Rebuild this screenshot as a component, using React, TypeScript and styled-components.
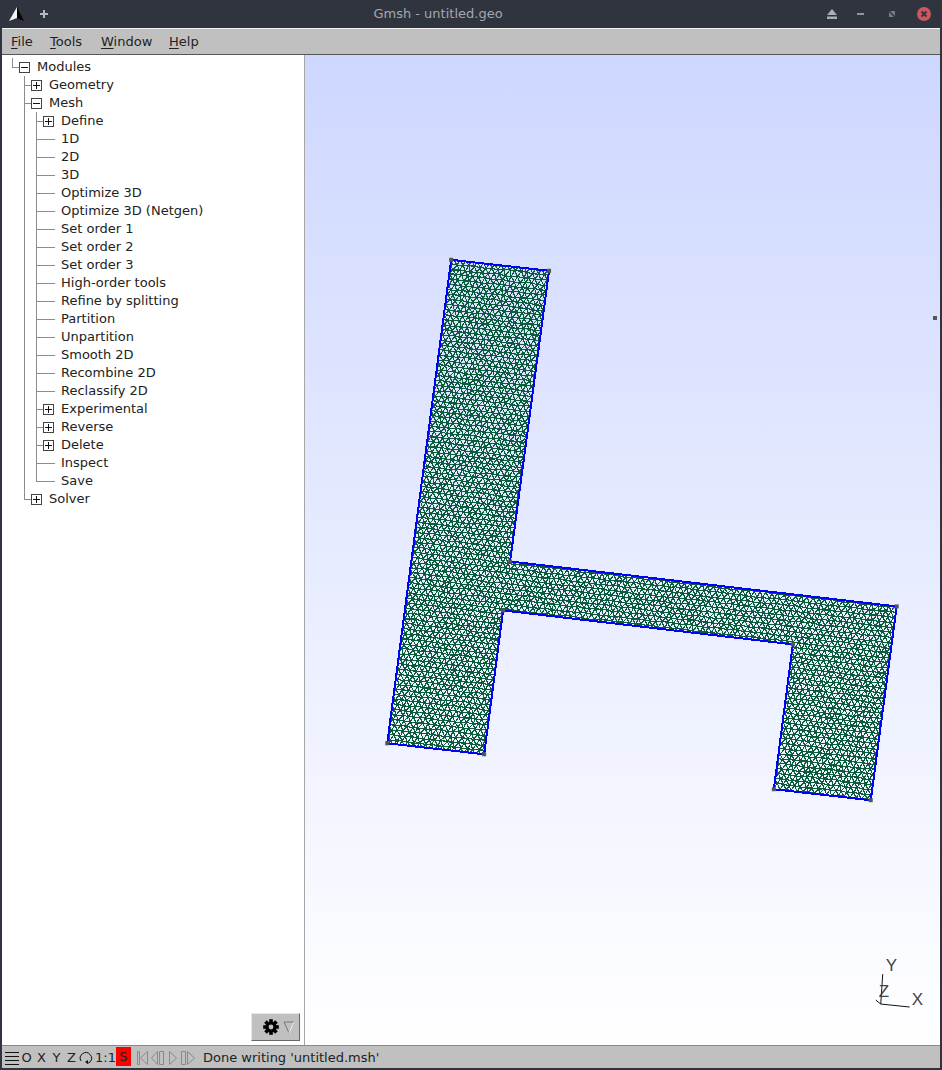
import React, { useMemo } from "react";
import styled, { createGlobalStyle } from "styled-components";

const GlobalStyle = createGlobalStyle`
  html, body { margin: 0; padding: 0; background: #2f343f; }
  #root { width: 942px; height: 1070px; }
`;

type Connector = "blank" | "through" | "tee" | "elbow";
type Toggle = "plus" | "minus" | "leaf";

interface TreeRowData {
  label: string;
  guides: Connector[];
  toggle: Toggle;
}

const leaf = (label: string, elbow = false): TreeRowData => ({
  label,
  guides: ["blank", "through", elbow ? "elbow" : "tee"],
  toggle: "leaf",
});
const child = (label: string, toggle: Toggle): TreeRowData => ({
  label,
  guides: ["blank", "through", "tee"],
  toggle,
});

const treeRows: TreeRowData[] = [
  { label: "Modules", guides: ["elbow"], toggle: "minus" },
  { label: "Geometry", guides: ["blank", "tee"], toggle: "plus" },
  { label: "Mesh", guides: ["blank", "tee"], toggle: "minus" },
  child("Define", "plus"),
  leaf("1D"),
  leaf("2D"),
  leaf("3D"),
  leaf("Optimize 3D"),
  leaf("Optimize 3D (Netgen)"),
  leaf("Set order 1"),
  leaf("Set order 2"),
  leaf("Set order 3"),
  leaf("High-order tools"),
  leaf("Refine by splitting"),
  leaf("Partition"),
  leaf("Unpartition"),
  leaf("Smooth 2D"),
  leaf("Recombine 2D"),
  leaf("Reclassify 2D"),
  child("Experimental", "plus"),
  child("Reverse", "plus"),
  child("Delete", "plus"),
  leaf("Inspect"),
  leaf("Save", true),
  { label: "Solver", guides: ["blank", "elbow"], toggle: "plus" },
];

const outline: [number, number][] = [
  [451, 260],
  [549, 271],
  [510, 562],
  [897, 607],
  [871, 801],
  [774, 790],
  [793, 645],
  [503, 611],
  [484, 755],
  [387, 744],
];

// jittered triangle lattice, same tilt as the part
function buildMesh(): string {
  let seed = 7;
  const rnd = () => {
    seed = (seed * 16807) % 2147483647;
    return seed / 2147483647 - 0.5;
  };
  const step = 5.9;
  const rowH = step * 0.866;
  const angle = (6.5 * Math.PI) / 180;
  const cos = Math.cos(angle);
  const sin = Math.sin(angle);
  const cols = 135;
  const rows = 165;
  const nodes: [number, number][][] = [];
  for (let r = 0; r < rows; r++) {
    const line: [number, number][] = [];
    for (let c = 0; c < cols; c++) {
      const lx = (c - cols / 2) * step + (r % 2 ? step / 2 : 0) + rnd() * 1.4;
      const ly = (r - rows / 2) * rowH + rnd() * 1.4;
      line.push([640 + lx * cos - ly * sin, 530 + lx * sin + ly * cos]);
    }
    nodes.push(line);
  }
  const pt = (p: [number, number]) => `${p[0].toFixed(1)} ${p[1].toFixed(1)}`;
  const parts: string[] = [];
  for (let r = 0; r < rows; r++) {
    for (let c = 0; c < cols; c++) {
      const n = nodes[r][c];
      if (n[0] < 370 || n[0] > 915 || n[1] < 245 || n[1] > 815) continue;
      if (c + 1 < cols) parts.push(`M${pt(n)}L${pt(nodes[r][c + 1])}`);
      if (r + 1 < rows) {
        parts.push(`M${pt(n)}L${pt(nodes[r + 1][c])}`);
        const d = r % 2 ? c + 1 : c - 1;
        if (d >= 0 && d < cols) parts.push(`M${pt(n)}L${pt(nodes[r + 1][d])}`);
      }
    }
  }
  return parts.join("");
}

const Window = styled.div`
  width: 942px;
  height: 1070px;
  display: flex;
  flex-direction: column;
  box-sizing: border-box;
  padding: 0 2px 2px;
  background: #2f343f;
  overflow: hidden;
  font-family: "DejaVu Sans", sans-serif;
  font-size: 13px;
  color: #222;
`;

const TitleBar = styled.header`
  height: 28px;
  flex: none;
  display: flex;
  align-items: center;
  margin: 0 -2px;
  padding: 0 10px 0 9px;
`;

const TitleLeft = styled.div`
  width: 42px;
  flex: none;
  display: flex;
  align-items: center;
  gap: 14px;
`;

const TitleText = styled.div`
  flex: 1;
  text-align: center;
  font-size: 13px;
  line-height: 16px;
  color: #a3a8b3;
`;

const TitleActions = styled.div`
  flex: none;
  display: flex;
  align-items: center;
  gap: 16px;
`;

const WinIcon = styled.svg<{ $nudge?: number }>`
  display: block;
  flex: none;
  margin-left: ${(p) => p.$nudge ?? 0}px;
`;

const MenuBar = styled.nav`
  height: 27px;
  flex: none;
  box-sizing: border-box;
  display: flex;
  align-items: center;
  padding: 1px 0 0 9px;
  background: #c0c0c0;
  border-top: 1px solid #f2f2f2;
  border-bottom: 1px solid #555;
`;

const MenuItem = styled.span<{ $w: number }>`
  width: ${(p) => p.$w}px;
  flex: none;
  line-height: 18px;
  u {
    text-underline-offset: 2px;
  }
`;

const Body = styled.main`
  flex: 1;
  min-height: 0;
  display: flex;
`;

const SidePanel = styled.aside`
  width: 302px;
  flex: none;
  display: flex;
  flex-direction: column;
  background: #fff;
`;

const Tree = styled.ul`
  flex: 1;
  list-style: none;
  margin: 0;
  padding: 3px 0 0 10px;
`;

const Row = styled.li`
  height: 18px;
  display: flex;
  align-items: stretch;
`;

const guideLine = "#8c8c8c";

const Guide = styled.span<{ $kind: Connector; $wide: boolean; $end: boolean }>`
  flex: none;
  box-sizing: border-box;
  width: ${(p) => (!p.$end ? "12px" : p.$wide ? "19px" : "7px")};
  background-repeat: no-repeat;
  background-image: ${(p) =>
    p.$kind === "blank"
      ? "none"
      : `linear-gradient(${guideLine}, ${guideLine}),
         linear-gradient(${guideLine}, ${guideLine})`};
  background-size: ${(p) =>
    p.$kind === "through"
      ? "1px 100%, 0 0"
      : p.$kind === "elbow"
        ? "1px 10px, 100% 1px"
        : "1px 100%, 100% 1px"};
  background-position: 0 0, 0 9px;
`;

const ToggleBox = styled.span`
  flex: none;
  width: 11px;
  height: 11px;
  margin: 4px 1px 0 0;
  box-sizing: border-box;
  border: 1px solid #444;
  background: #fff;
  display: grid;
  place-items: center;
`;

const ToggleGlyph = styled.svg`
  display: block;
`;

const Label = styled.span`
  margin-left: 6px;
  line-height: 18px;
  white-space: nowrap;
`;

const PanelFoot = styled.div`
  flex: none;
  display: flex;
  justify-content: flex-end;
  padding: 0 4px 4px 0;
`;

const GearButton = styled.button`
  width: 49px;
  height: 28px;
  padding: 0 3px 0 10px;
  box-sizing: border-box;
  display: flex;
  align-items: center;
  justify-content: space-between;
  background: #c0c0c0;
  border: 1px solid;
  border-color: #e6e6e6 #666 #666 #e6e6e6;
`;

const Canvas = styled.section`
  flex: 1;
  min-width: 0;
  position: relative;
  border-left: 1px solid #a6a6a6;
  background: linear-gradient(#ced7ff 0%, #ffffff 100%);
`;

const Viewport = styled.svg`
  display: block;
  width: 100%;
  height: 100%;
`;

const SashDot = styled.span`
  position: absolute;
  right: 3px;
  top: 261px;
  width: 4px;
  height: 4px;
  background: #555;
`;

const StatusBar = styled.footer`
  height: 23px;
  flex: none;
  box-sizing: border-box;
  display: flex;
  align-items: center;
  padding: 1px 0 0 3px;
  background: #c0c0c0;
  border-top: 1px solid #8a8a8a;
`;

const StatusIcon = styled.svg<{ $after?: number }>`
  display: block;
  flex: none;
  margin-right: ${(p) => p.$after ?? 0}px;
`;

const StatusKey = styled.span<{ $w: number; $active?: boolean }>`
  flex: none;
  width: ${(p) => p.$w}px;
  align-self: ${(p) => (p.$active ? "stretch" : "auto")};
  margin-bottom: ${(p) => (p.$active ? "2px" : "0")};
  line-height: ${(p) => (p.$active ? "19px" : "18px")};
  text-align: center;
  background: ${(p) => (p.$active ? "#ff0000" : "transparent")};
`;

const NavIcons = styled.svg`
  display: block;
  flex: none;
  margin-left: 4px;
`;

const StatusMessage = styled.span`
  margin-left: 8px;
  white-space: nowrap;
`;

const MeshView: React.FC = () => {
  const meshPath = useMemo(buildMesh, []);
  const points = outline.map((p) => p.join(",")).join(" ");
  return (
    <Viewport viewBox="305 55 635 991">
      <defs>
        <clipPath id="part">
          <polygon points={points} />
        </clipPath>
      </defs>
      <g clipPath="url(#part)">
        <path d={meshPath} stroke="#0a5c3a" strokeWidth="1.2" fill="none" shapeRendering="crispEdges" />
      </g>
      <polygon points={points} fill="none" stroke="#0000ff" strokeWidth="2" shapeRendering="crispEdges" />
      {outline.map(([x, y]) => (
        <rect key={`${x}-${y}`} x={x - 2} y={y - 2} width="4" height="4" fill="#555" />
      ))}
      <g stroke="#111" strokeWidth="1" fill="none">
        <path d="M881 1005 L883 975" />
        <path d="M881 1005 L910 1008" />
        <path d="M881 1005 L876 1001" />
      </g>
      <g fontFamily="'Liberation Sans', sans-serif" fontSize="17" fill="#444">
        <text x="886" y="972">Y</text>
        <text x="912" y="1006">X</text>
        <text x="879" y="998">Z</text>
      </g>
    </Viewport>
  );
};

const App: React.FC = () => (
  <>
    <GlobalStyle />
    <Window>
      <TitleBar>
        <TitleLeft>
          <WinIcon width="16" height="16" viewBox="0 0 16 16">
            <polygon points="8,1 0,15 8,12" fill="#f2f2f2" />
            <polygon points="8,1 15,15 8,12" fill="#050505" />
          </WinIcon>
          <WinIcon width="10" height="10" viewBox="0 0 10 10">
            <path d="M5 1v8M1 5h8" stroke="#b6bac3" strokeWidth="2" />
          </WinIcon>
        </TitleLeft>
        <TitleText>Gmsh - untitled.geo</TitleText>
        <TitleActions>
          <WinIcon width="14" height="14" viewBox="0 0 14 14">
            <path d="M7 2l5 6H2z" fill="#a9aeb9" />
            <rect x="2" y="9.5" width="10" height="2.5" fill="#a9aeb9" />
          </WinIcon>
          <WinIcon width="14" height="14" viewBox="0 0 14 14" $nudge={-1}>
            <rect x="3" y="6" width="7" height="2" fill="#8f94a0" />
          </WinIcon>
          <WinIcon width="14" height="14" viewBox="0 0 14 14" $nudge={1}>
            <path d="M5 4h5v5z M9 10H4V5z" fill="#777c88" />
          </WinIcon>
          <WinIcon width="16" height="16" viewBox="0 0 16 16" $nudge={1}>
            <circle cx="8" cy="8" r="7" fill="#cc575d" />
            <path d="M5.5 5.5l5 5M10.5 5.5l-5 5" stroke="#2f343f" strokeWidth="1.8" />
          </WinIcon>
        </TitleActions>
      </TitleBar>

      <MenuBar>
        <MenuItem $w={39}><u>F</u>ile</MenuItem>
        <MenuItem $w={51}><u>T</u>ools</MenuItem>
        <MenuItem $w={68}><u>W</u>indow</MenuItem>
        <MenuItem $w={40}><u>H</u>elp</MenuItem>
      </MenuBar>

      <Body>
        <SidePanel>
          <Tree>
            {treeRows.map((row) => (
              <Row key={row.label}>
                {row.guides.map((g, i) => (
                  <Guide
                    key={i}
                    $kind={g}
                    $end={i === row.guides.length - 1}
                    $wide={row.toggle === "leaf"}
                  />
                ))}
                {row.toggle !== "leaf" && (
                  <ToggleBox>
                    <ToggleGlyph width="7" height="7" viewBox="0 0 7 7">
                      <path
                        d={row.toggle === "plus" ? "M0 3.5h7M3.5 0v7" : "M0 3.5h7"}
                        stroke="#111"
                        strokeWidth="1"
                        shapeRendering="crispEdges"
                      />
                    </ToggleGlyph>
                  </ToggleBox>
                )}
                <Label>{row.label}</Label>
              </Row>
            ))}
          </Tree>
          <PanelFoot>
            <GearButton type="button" aria-label="Options">
              <svg width="18" height="18" viewBox="0 0 18 18">
                <g fill="#000">
                  <circle cx="9" cy="9" r="5.6" />
                  {[0, 45, 90, 135].map((a) => (
                    <rect key={a} x="7.2" y="1.2" width="3.6" height="15.6" transform={`rotate(${a} 9 9)`} />
                  ))}
                </g>
                <circle cx="9" cy="9" r="2.4" fill="#c0c0c0" />
              </svg>
              <svg width="14" height="14" viewBox="0 0 14 14">
                <path d="M2 2h10L7 13z" fill="none" stroke="#777" />
                <path d="M12 2L7 13" stroke="#fff" />
              </svg>
            </GearButton>
          </PanelFoot>
        </SidePanel>
        <Canvas>
          <MeshView />
          <SashDot />
        </Canvas>
      </Body>

      <StatusBar>
        <StatusIcon width="14" height="14" viewBox="0 0 14 14">
          <path d="M0 1.5h14M0 5.5h14M0 9.5h14M0 13.5h14" stroke="#111" strokeWidth="1" />
        </StatusIcon>
        <StatusKey $w={15}>O</StatusKey>
        <StatusKey $w={15}>X</StatusKey>
        <StatusKey $w={15}>Y</StatusKey>
        <StatusKey $w={15}>Z</StatusKey>
        <StatusIcon width="14" height="14" viewBox="0 0 14 14" $after={2}>
          <path d="M2 10A5.6 5.6 0 1 1 11 11L8.5 12.5" fill="none" stroke="#111" />
          <path d="M6 11l3-2v4z" fill="#111" />
        </StatusIcon>
        <StatusKey $w={21}>1:1</StatusKey>
        <StatusKey $w={15} $active>S</StatusKey>
        <NavIcons width="60" height="16" viewBox="0 0 60 16">
          <g fill="none" stroke="#8a8a8a">
            <path d="M2.5 1.5h2v13h-2zM12.5 1.5v13L5.5 8z" />
            <path d="M22.5 1.5v13L16.5 8zM24.5 1.5h4v13h-4z" />
            <path d="M34.5 1.5v13L41.5 8z" />
            <path d="M46.5 1.5h4v13h-4zM52.5 1.5v13L59.5 8z" />
          </g>
        </NavIcons>
        <StatusMessage>Done writing 'untitled.msh'</StatusMessage>
      </StatusBar>
    </Window>
  </>
);

export default App;
